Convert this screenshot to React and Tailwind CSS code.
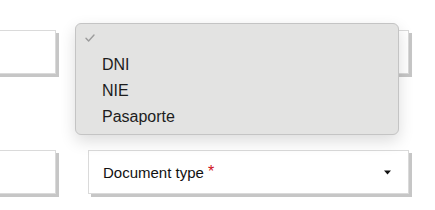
export default function App() {
  const options = ["DNI", "NIE", "Pasaporte"];

  return (
    <div className="relative h-[210px] w-[435px] overflow-hidden bg-white font-['Liberation_Sans',Arial,sans-serif] text-[#1d1d1d]">
      {/* form rows */}
      <div className="flex flex-col gap-[76px] pt-[30px]">
        <div className="flex gap-8">
          <div className="-ml-2 h-[44px] w-[64px] border border-[#dadada] bg-white shadow-[3px_3px_0_#c6c6c6]" />
          <div className="h-[44px] w-[321px] border border-[#dadada] bg-white shadow-[3px_3px_0_#c6c6c6]" />
        </div>
        <div className="flex gap-8">
          <div className="-ml-2 h-[44px] w-[64px] border border-[#dadada] bg-white shadow-[3px_3px_0_#c6c6c6]" />
          <div className="flex h-[44px] w-[321px] items-center justify-between border border-[#dadada] bg-white pl-[14px] pr-[17px] pt-[2px] shadow-[3px_3px_0_#c6c6c6]">
            <span className="text-[15px] text-[#111]">
              Document type{" "}
              <span className="relative -top-[1px] text-[16px] text-[#d0101b]">*</span>
            </span>
            <svg width="7" height="5" viewBox="0 0 7 5" className="mb-[1px]">
              <path d="M0 0.5h7L3.5 4.5z" fill="#111" />
            </svg>
          </div>
        </div>
      </div>

      {/* open select menu */}
      <div className="absolute left-[75px] top-[23px] w-[324px] rounded-[6px] border border-[#c4c4c4] bg-[#e3e3e2] pb-[4px] pt-[2px] shadow-[0_6px_16px_rgba(0,0,0,0.14)]">
        <div className="flex h-[26px] items-center pl-[9px]">
          <svg width="10" height="8" viewBox="0 0 10 8" className="-mt-[2px]">
            <path d="M1 4.2L3.6 7L9 1" fill="none" stroke="#9c9c9c" strokeWidth="1.4" strokeLinecap="round" strokeLinejoin="round" />
          </svg>
        </div>
        {options.map((o) => (
          <div key={o} className="h-[26px] pl-[26px] text-[16px] leading-[26px]">
            {o}
          </div>
        ))}
      </div>
    </div>
  );
}
